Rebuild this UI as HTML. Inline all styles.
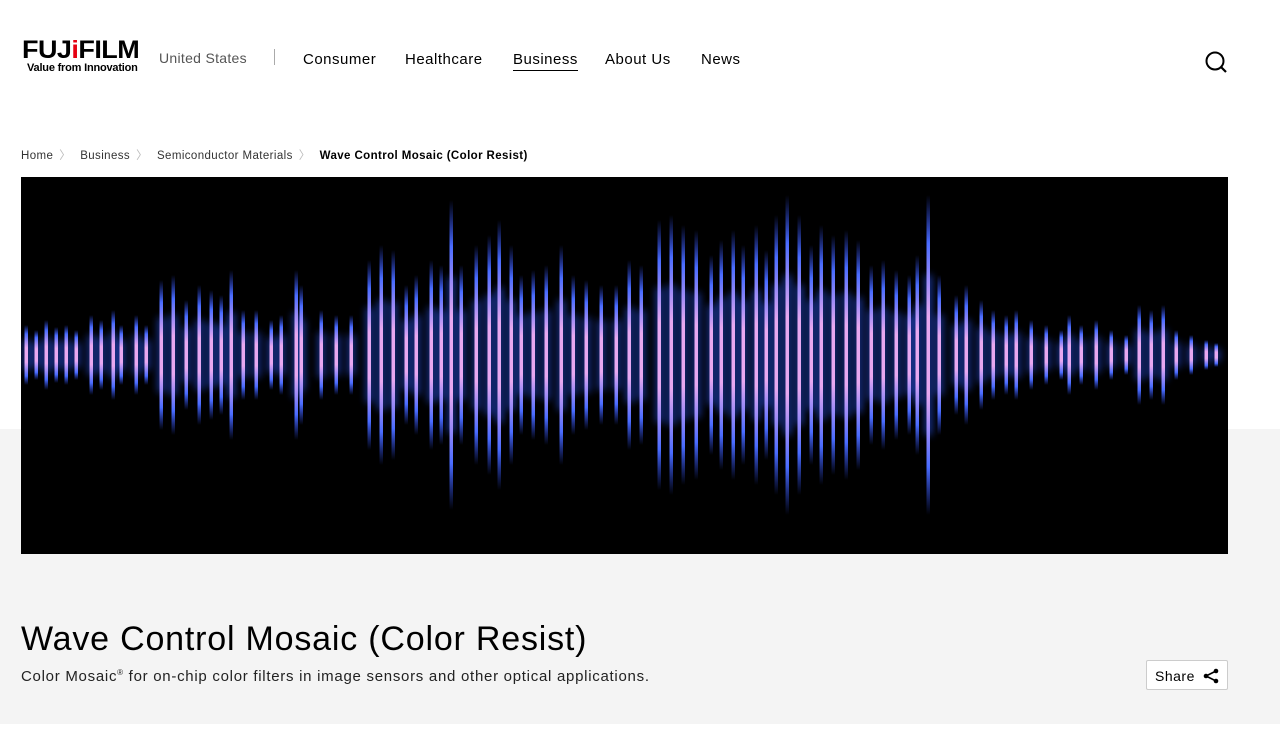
<!DOCTYPE html>
<html><head><meta charset="utf-8"><style>
*{margin:0;padding:0;box-sizing:border-box}
body{width:1280px;height:742px;background:#fff;font-family:"Liberation Sans",sans-serif;color:#000;position:relative;overflow:hidden}
.grey{position:absolute;left:0;top:429px;width:1280px;height:295px;background:#f4f4f4}
.logo{position:absolute;left:22px;top:38px}
.logo .f{font-size:25px;font-weight:bold;letter-spacing:-0.5px;line-height:24px;transform:scaleX(1.08);transform-origin:left;display:block}
.logo .t{font-size:11px;font-weight:bold;margin-left:5px;line-height:12px;display:block;letter-spacing:-0.2px}
.us{position:absolute;left:159px;top:50px;font-size:14px;color:#555;letter-spacing:.3px}
.sep{position:absolute;left:274px;top:49px;width:1px;height:16px;background:#aaa}
nav a{position:absolute;top:51px;font-size:15px;color:#000;text-decoration:none;letter-spacing:.5px}
.act{border-bottom:1px solid #000;padding-bottom:2px}
.bc{position:absolute;top:147px;left:21px;font-size:11.5px;color:#333;letter-spacing:.4px}
.bc span{margin-right:6px}
.bc i{font-style:normal;color:#bbb;margin-right:9px}
.hero{position:absolute;left:21px;top:177px;width:1207px;height:377px;background:#000}
h1{position:absolute;left:21px;top:620px;font-size:34px;font-weight:normal;letter-spacing:.8px}
.sub{position:absolute;left:21px;top:668px;font-size:15px;color:#222;letter-spacing:.72px}
.share{position:absolute;left:1146px;top:660px;width:82px;height:30px;border:1px solid #ccc;background:#fff;border-radius:2px;font-size:14px;padding:7px 0 0 8px;letter-spacing:.5px}
</style></head><body>
<div class="grey"></div>
<div class="logo"><span class="f">FUJ<span style="color:#e60012">i</span>FILM</span><span class="t">Value from Innovation</span></div>
<div class="us">United States</div>
<div class="sep"></div>
<nav><a style="left:303px">Consumer</a><a style="left:405px">Healthcare</a><a style="left:513px" class="act">Business</a><a style="left:605px">About Us</a><a style="left:701px">News</a></nav>
<svg style="position:absolute;left:1204px;top:50px" width="24" height="24" viewBox="0 0 24 24"><circle cx="11" cy="11" r="8.5" fill="none" stroke="#000" stroke-width="2"/><line x1="17" y1="17" x2="22" y2="22" stroke="#000" stroke-width="2.2"/></svg>
<div class="bc"><span>Home</span><i>〉</i><span>Business</span><i>〉</i><span>Semiconductor Materials</span><i>〉</i><b style="color:#000">Wave Control Mosaic (Color Resist)</b></div>
<div class="hero"><svg id="w" width="1207" height="377" viewBox="0 0 1207 377">
<defs>
<linearGradient id="g" x1="0" y1="0" x2="0" y2="1"><stop offset="0" stop-color="#3050ff" stop-opacity="0"/><stop offset=".15" stop-color="#4a6cff"/><stop offset=".38" stop-color="#e8a8f0"/><stop offset=".62" stop-color="#e8a8f0"/><stop offset=".85" stop-color="#4a6cff"/><stop offset="1" stop-color="#3050ff" stop-opacity="0"/></linearGradient>
<filter id="b"><feGaussianBlur stdDeviation="4"/></filter>
</defs>
<g id="glow" filter="url(#b)" fill="#2a5aff" opacity=".6"></g>
<g id="bars" fill="url(#g)"></g>
</svg></div>
<script>
var d=[[5,30],[15,25],[25,35],[35,28],[45,30],[55,25],[70,40],[80,35],[92,45],[100,30],[115,40],[125,30],[140,75],[152,80],[165,55],[178,70],[190,65],[200,60],[210,85],[222,45],[235,45],[250,35],[260,40],[275,85],[280,70],[300,45],[315,40],[330,40],[348,95],[360,110],[372,105],[385,70],[395,80],[410,95],[420,90],[430,155],[440,90],[455,110],[468,120],[478,135],[490,110],[500,80],[512,85],[525,90],[540,110],[552,80],[565,75],[580,70],[595,70],[608,95],[620,90],[638,135],[650,140],[662,130],[675,125],[690,100],[700,115],[712,125],[722,110],[735,130],[745,105],[755,140],[766,160],[778,140],[790,110],[800,130],[812,120],[825,125],[837,115],[850,90],[862,95],[875,85],[888,80],[896,100],[907,160],[918,80],[935,60],[945,70],[960,55],[972,45],[985,40],[995,45],[1010,35],[1025,30],[1040,25],[1048,40],[1060,30],[1075,35],[1090,25],[1105,20],[1118,50],[1130,45],[1142,50],[1155,25],[1170,20],[1185,15],[1195,12]];
var ns="http://www.w3.org/2000/svg",gl=document.getElementById('glow'),ba=document.getElementById('bars');
d.forEach(function(p){var r=document.createElementNS(ns,'rect');r.setAttribute('x',p[0]-3);r.setAttribute('width',7);r.setAttribute('y',178-p[1]*0.5);r.setAttribute('height',p[1]*1.0);gl.appendChild(r);
var s=document.createElementNS(ns,'rect');s.setAttribute('x',p[0]-1.5);s.setAttribute('width',3.5);s.setAttribute('y',178-p[1]);s.setAttribute('height',p[1]*2);ba.appendChild(s);});
</script>
<h1>Wave Control Mosaic (Color Resist)</h1>
<div class="sub">Color Mosaic<sup style="font-size:8px">®</sup> for on-chip color filters in image sensors and other optical applications.</div>
<div class="share">Share <svg style="position:absolute;left:56px;top:7px" width="16" height="16" viewBox="0 0 16 16"><circle cx="13" cy="3" r="2.3"/><circle cx="3" cy="8" r="2.3"/><circle cx="13" cy="13" r="2.3"/><path d="M13 3L3 8L13 13" stroke="#000" stroke-width="1.6" fill="none"/></svg></div>
</body></html>
